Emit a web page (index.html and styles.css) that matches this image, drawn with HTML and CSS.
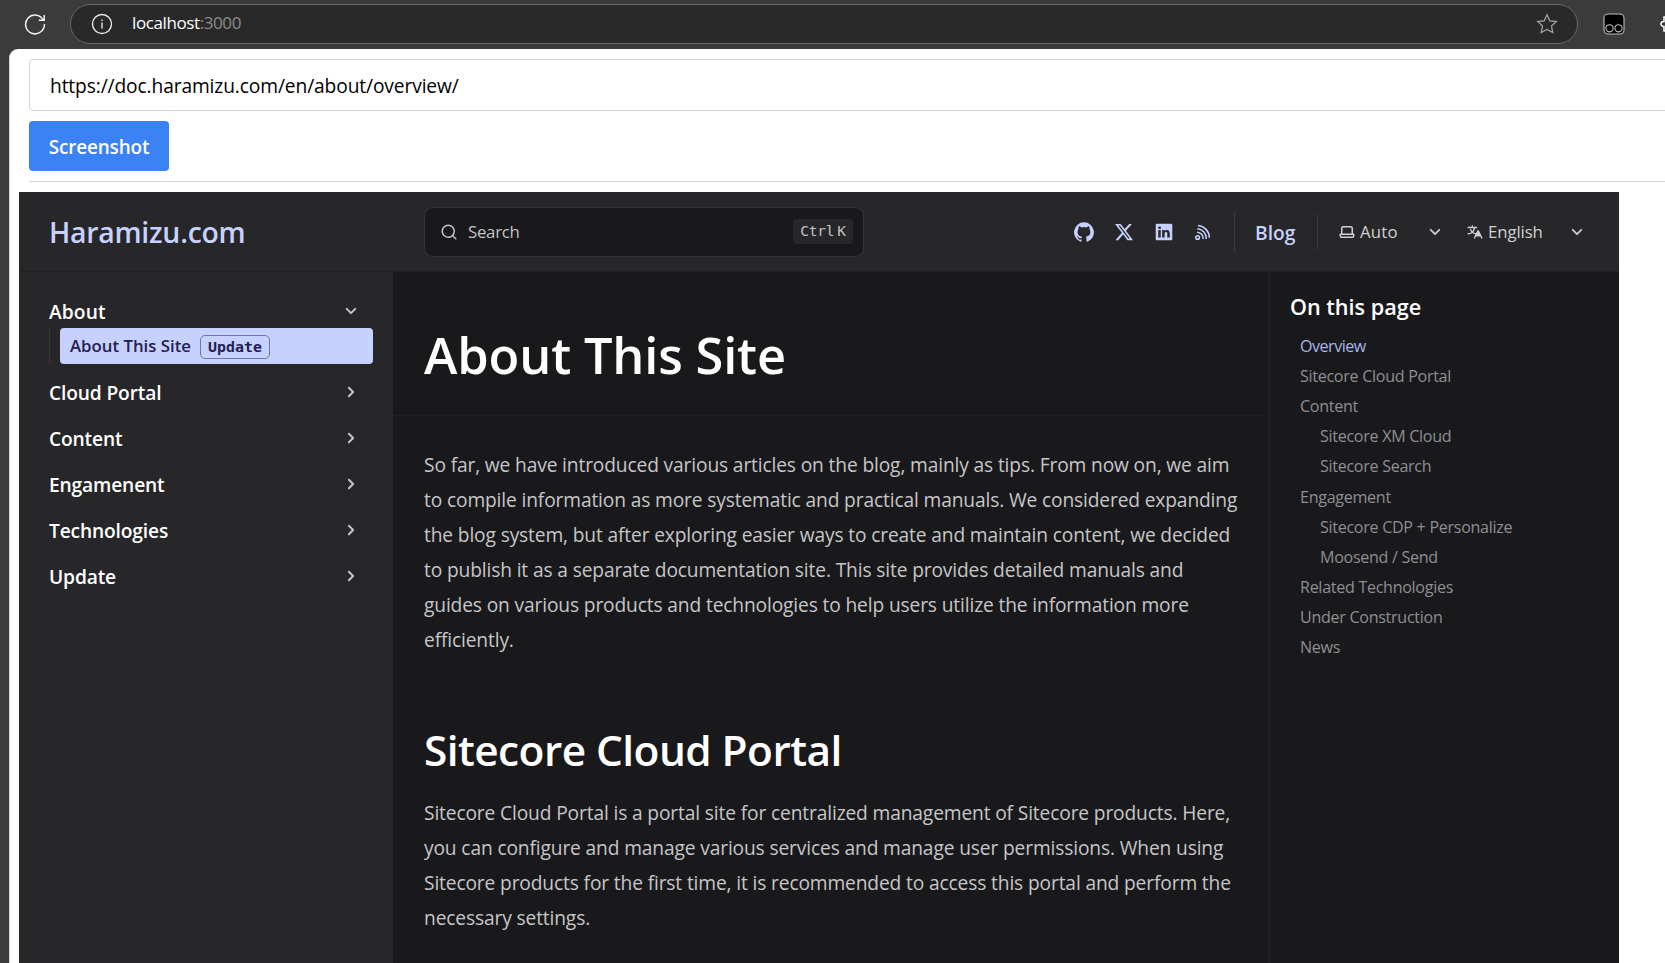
FILE: index.html
```html
<!DOCTYPE html>
<html lang="en">
<head>
<meta charset="utf-8">
<title>localhost:3000</title>
<link rel="stylesheet" href="styles.css">
</head>
<body>
<svg class="sprite" aria-hidden="true">
  <symbol id="chevron" viewBox="0 0 24 24"><path d="m14.83 11.29-4.24-4.24a1 1 0 1 0-1.42 1.41L12.71 12l-3.54 3.54a1 1 0 0 0 0 1.41 1 1 0 0 0 .71.29 1 1 0 0 0 .71-.29l4.24-4.24a1.002 1.002 0 0 0 0-1.42Z"/></symbol>
</svg>
<div class="toolbar">
  <svg class="reload" viewBox="0 0 22 22"><path d="M19.6 7.6A9.4 9.4 0 1 0 20.4 11M20.2 2v5.2h-5.4"/></svg>
  <div class="address">
    <svg class="info" viewBox="0 0 22 22"><circle cx="11" cy="11" r="9.5"/><path d="M11 9.6v6M11 6.4v1.6"/></svg>
    <span class="host">localhost</span><span class="port">:3000</span>
    <svg class="star" viewBox="0 0 22 22"><path d="m11 1.8 2.8 6 6.5.8-4.8 4.5 1.3 6.5L11 16.4l-5.8 3.2 1.3-6.5L1.7 8.6l6.5-.8z"/></svg>
  </div>
  <svg class="ext" viewBox="0 0 22 22"><rect x="1" y="1" width="20" height="20" rx="4"/><circle cx="6.5" cy="15.3" r="3.6"/><circle cx="15.5" cy="15.3" r="3.6"/></svg>
  <svg class="puzzle" viewBox="0 0 22 22"><path d="M8 4h3a2.5 2.5 0 0 1 5 0h4v14H4v-4.500H3.500a2.300 2.300 0 0 1 0-5H4V4z"/></svg>
</div>
<main class="page">
  <div class="field">https://doc.haramizu.com/en/about/overview/</div>
  <button class="shoot">Screenshot</button>
  <hr class="rule">
  <div class="shot">
    <header class="site-head">
      <div class="brand">Haramizu.com</div>
      <div class="search">
        <svg viewBox="0 0 24 24"><path d="M21.71 20.29 18 16.61A9 9 0 1 0 16.61 18l3.68 3.68a.999.999 0 0 0 1.42 0 1 1 0 0 0 0-1.39ZM11 18a7 7 0 1 1 0-14 7 7 0 0 1 0 14Z"/></svg>
        <span class="search-label">Search</span>
        <kbd><span>Ctrl</span><span>K</span></kbd>
      </div>
      <div class="social">
        <svg viewBox="0 0 24 24"><path d="M12 .3a12 12 0 0 0-3.8 23.38c.6.12.83-.26.83-.57L9 21.07c-3.34.72-4.04-1.61-4.04-1.61-.55-1.39-1.34-1.76-1.34-1.76-1.08-.74.09-.73.09-.73 1.2.09 1.83 1.24 1.83 1.24 1.08 1.83 2.81 1.3 3.5 1 .1-.78.42-1.31.76-1.61-2.67-.3-5.47-1.33-5.47-5.93 0-1.31.47-2.38 1.24-3.22-.14-.3-.54-1.52.1-3.18 0 0 1-.32 3.3 1.23a11.5 11.5 0 0 1 6 0c2.28-1.55 3.29-1.23 3.29-1.23.64 1.66.24 2.88.12 3.18a4.65 4.65 0 0 1 1.23 3.22c0 4.61-2.8 5.63-5.48 5.92.42.36.81 1.1.81 2.22l-.01 3.29c0 .31.2.69.82.57A12 12 0 0 0 12 .3Z"/></svg>
        <svg viewBox="0 0 24 24"><path d="M18.24 2.25h3.308l-7.227 8.26 8.502 11.24H16.17l-5.214-6.817L4.99 21.75H1.68l7.73-8.835L1.254 2.25H8.08l4.713 6.231zm-1.161 17.52h1.833L7.084 4.126H5.117z"/></svg>
        <svg viewBox="0 0 24 24"><path d="M20.47,2H3.53A1.45,1.45,0,0,0,2.06,3.43V20.57A1.45,1.45,0,0,0,3.53,22H20.47a1.45,1.45,0,0,0,1.47-1.43V3.43A1.45,1.45,0,0,0,20.47,2ZM8.09,18.74h-3v-9h3ZM6.59,8.48a1.56,1.56,0,1,1,0-3.12,1.57,1.57,0,1,1,0,3.12ZM18.91,18.74h-3V13.91c0-1.21-.43-2-1.52-2A1.65,1.65,0,0,0,12.85,13a2,2,0,0,0-.1.73v5h-3s0-8.18,0-9h3V11A3,3,0,0,1,15.46,9.5c2,0,3.45,1.29,3.45,4.06Z"/></svg>
        <svg class="rss" viewBox="0 0 24 24"><circle cx="4.600" cy="19" r="2.300"/><path d="M4 12.200a8 8 0 0 1 7.600 8.800M4.200 8A12.200 12.200 0 0 1 15.600 20.800M5 3.800A15.500 15.500 0 0 1 19.400 19.200"/></svg>
      </div>
      <a class="blog">Blog</a>
      <div class="picker theme">
        <svg viewBox="0 0 24 24"><path d="M21 14h-1V7a3 3 0 0 0-3-3H7a3 3 0 0 0-3 3v7H3a1 1 0 0 0-1 1v2a3 3 0 0 0 3 3h14a3 3 0 0 0 3-3v-2a1 1 0 0 0-1-1ZM6 7a1 1 0 0 1 1-1h10a1 1 0 0 1 1 1v7H6V7Zm14 10a1 1 0 0 1-1 1H5a1 1 0 0 1-1-1v-1h16v1Z"/></svg>
        <span>Auto</span>
        <svg class="chev down"><use href="#chevron"/></svg>
      </div>
      <div class="picker lang">
        <svg viewBox="0 0 24 24"><path d="M8.516 3a.94.94 0 0 0-.941.94v1.15H2.94a.94.94 0 1 0 0 1.882h7.362a7.422 7.422 0 0 1-1.787 3.958 7.42 7.42 0 0 1-1.422-2.425.94.94 0 1 0-1.774.627 9.303 9.303 0 0 0 1.785 3.043 7.422 7.422 0 0 1-4.164 1.278.94.94 0 1 0 0 1.881 9.303 9.303 0 0 0 5.575-1.855 9.303 9.303 0 0 0 4.11 1.74l-.763 1.525a.968.968 0 0 0-.016.034l-1.385 2.77a.94.94 0 1 0 1.683.841l1.133-2.267h5.806l1.134 2.267a.94.94 0 0 0 1.683-.841l-1.385-2.769a.95.95 0 0 0-.018-.036l-3.476-6.951a.94.94 0 0 0-1.682 0l-1.82 3.639a7.423 7.423 0 0 1-3.593-1.256 9.303 9.303 0 0 0 2.27-5.203h1.894a.94.94 0 0 0 0-1.881H9.456V3.94A.94.94 0 0 0 8.516 3Zm6.426 11.794a1.068 1.068 0 0 1-.02.039l-.703 1.407h3.924l-1.962-3.924-1.24 2.478Z"/></svg>
        <span>English</span>
        <svg class="chev down"><use href="#chevron"/></svg>
      </div>
    </header>
    <div class="cols">
      <nav class="side">
        <div class="group open"><span>About</span><svg class="chev down"><use href="#chevron"/></svg></div>
        <div class="sub"><a class="current"><span>About This Site</span><em class="badge">Update</em></a></div>
        <div class="group"><span>Cloud Portal</span><svg class="chev"><use href="#chevron"/></svg></div>
        <div class="group"><span>Content</span><svg class="chev"><use href="#chevron"/></svg></div>
        <div class="group"><span>Engamenent</span><svg class="chev"><use href="#chevron"/></svg></div>
        <div class="group"><span>Technologies</span><svg class="chev"><use href="#chevron"/></svg></div>
        <div class="group"><span>Update</span><svg class="chev"><use href="#chevron"/></svg></div>
      </nav>
      <article class="content">
        <div class="hero"><h1>About This Site</h1></div>
        <div class="body">
          <p>So far, we have introduced various articles on the blog, mainly as tips. From now on, we aim<br>to compile information as more systematic and practical manuals. We considered expanding<br>the blog system, but after exploring easier ways to create and maintain content, we decided<br>to publish it as a separate documentation site. This site provides detailed manuals and<br>guides on various products and technologies to help users utilize the information more<br>efficiently.</p>
          <h2>Sitecore Cloud Portal</h2>
          <p>Sitecore Cloud Portal is a portal site for centralized management of Sitecore products. Here,<br>you can configure and manage various services and manage user permissions. When using<br>Sitecore products for the first time, it is recommended to access this portal and perform the<br>necessary settings.</p>
        </div>
      </article>
      <aside class="toc">
        <h3>On this page</h3>
        <a class="here">Overview</a>
        <a>Sitecore Cloud Portal</a>
        <a>Content</a>
        <a class="deep">Sitecore XM Cloud</a>
        <a class="deep">Sitecore Search</a>
        <a>Engagement</a>
        <a class="deep">Sitecore CDP + Personalize</a>
        <a class="deep">Moosend / Send</a>
        <a>Related Technologies</a>
        <a>Under Construction</a>
        <a>News</a>
      </aside>
    </div>
  </div>
</main>
</body>
</html>
```
FILE: styles.css
```css
* { box-sizing: border-box; }
body {
  margin: 0;
  height: 963px;
  overflow: hidden;
  background: #3b3b3b;
  font-family: "Open Sans", "Noto Sans", sans-serif;
  display: flex;
  flex-direction: column;
}
svg { flex: none; display: block; fill: currentColor; }
.sprite { width: 0; height: 0; position: absolute; }
h1, h2, h3, p { margin: 0; }

.toolbar { height: 49px; flex: none; display: flex; align-items: center; padding: 0 0 1px 24px; color: #fff; }
.reload { width: 22px; height: 22px; fill: none; stroke: #f2f2f2; stroke-width: 1.5; }
.address { margin-left: 24px; width: 1508px; height: 40px; flex: none; display: flex; align-items: center; padding: 0 19px 0 20px; border: 1px solid #666; border-radius: 20px; background: #292929; font-size: 17px; letter-spacing: -.4px; }
.address span { line-height: 36px; height: 38px; }
.info { width: 22px; height: 22px; fill: none; stroke: #e6e6e6; stroke-width: 1.4; margin-right: 19px; }
.port { color: #8c8c8c; }
.star { width: 22px; height: 22px; margin-left: auto; fill: none; stroke: #a0a0a0; stroke-width: 1.3; }
.ext { width: 22px; height: 22px; margin-left: 25px; fill: #000; stroke: #bdbdbd; stroke-width: 1.1; }
.puzzle { width: 22px; height: 22px; margin-left: 35px; fill: none; stroke: #fff; stroke-width: 1.5; }

.page { flex: 1; margin-left: 9px; padding: 10px 0 0 9px; background: #fff; border-left: 1px solid #dadada; border-top-left-radius: 9px; overflow: hidden; }
.field { margin-left: 10px; width: 1700px; height: 52px; border: 1px solid #d1d5db; border-radius: 4px; padding: 0 20px; font-size: 19.2px; line-height: 51px; letter-spacing: -.12px; color: #000; }
.shoot { display: block; margin: 10px 0 0 10px; width: 140px; height: 50px; padding: 0; border: 0; border-radius: 4px; background: #3b82f6; color: #fff; font: 600 18.9px/52px "Open Sans", sans-serif; letter-spacing: -.14px; white-space: nowrap; }
.rule { margin: 10px 0 10px 10px; border: 0; border-top: 1px solid #d1d5db; }

.shot { width: 1600px; height: 771px; background: #19191b; }
.site-head { height: 80px; display: flex; align-items: center; background: #272729; border-bottom: 1px solid #202022; color: #c7d1ff; white-space: nowrap; }
.brand { width: 405px; padding-left: 30px; font-size: 28.4px; letter-spacing: -.25px; font-weight: 600; flex: none; }
.search { width: 440px; height: 50px; flex: none; display: flex; align-items: center; padding: 0 10px 0 15px; border: 1px solid #343436; border-radius: 9px; background: #19191b; color: #c2c2c4; font-size: 16.8px; letter-spacing: -.25px; }
.search svg { width: 18px; height: 18px; margin-right: 10px; }
kbd { margin-left: auto; width: 60px; height: 25px; display: flex; justify-content: center; gap: 3px; background: #272729; border-radius: 4px; font: 14.5px/25px "DejaVu Sans Mono", monospace; }
.social { flex: none; display: flex; align-items: center; gap: 20px; margin-left: 210px; height: 40px; padding-right: 20px; border-right: 1px solid #3a3a3d; }
.social svg { width: 20px; height: 20px; }
.social .rss { width: 19px; margin-right: 1px; fill: none; stroke: currentColor; stroke-width: 1.9; }
.blog { height: 36px; width: 83px; flex: none; padding: 3px 0 0 20px; border-right: 1px solid #3a3a3d; font-size: 19.2px; font-weight: 600; line-height: 32px; }
.picker { flex: none; display: flex; align-items: center; color: #d0d0d2; font-size: 16.8px; }
.picker svg:first-child { width: 18px; height: 18px; margin-right: 4px; }
.theme { margin-left: 20px; width: 128px; padding-right: 19px; letter-spacing: .2px; }
.lang { width: 123px; letter-spacing: -.1px; }
.chev { width: 24px; height: 24px; margin-left: auto; color: #c4c4c6; }
.down { transform: rotate(90deg); }

.cols { display: flex; height: 691px; }
.side { width: 374px; flex: none; background: #272729; padding: 23px 20px 0 30px; color: #fff; }
.group { height: 46px; display: flex; align-items: center; padding-right: 10px; font-size: 19.2px; font-weight: 600; letter-spacing: -.15px; }
.open { height: 32px; letter-spacing: .1px; }
.sub { height: 37px; margin-bottom: 5px; padding: 1px 0 0 10px; border-left: 1px solid #363638; }
.current { display: flex; align-items: center; height: 36px; border-radius: 4px; background: #c7d1ff; color: #252050; padding: 0 0 1px 10px; font-size: 16.8px; font-weight: 600; }
.badge { margin: 2px 0 0 9px; width: 70px; height: 24px; text-align: center; border: 1px solid #7377a8; border-radius: 5px; font: bold 14.9px/23px "DejaVu Sans Mono", monospace; }

.content { width: 876px; flex: none; }
.hero { height: 144px; border-bottom: 1px solid #1f1f21; padding: 53px 0 0 31px; }
h1 { color: #fff; font-size: 50.5px; line-height: 60px; font-weight: 600; letter-spacing: -.15px; white-space: nowrap; }
.body { padding: 31px 0 0 31px; color: #c6c6c8; font-size: 19.2px; line-height: 35px; letter-spacing: -.14px; white-space: nowrap; }
h2 { color: #fff; font-size: 42.4px; line-height: 54px; font-weight: 600; letter-spacing: -.55px; margin: 66px 0 18px; }

.toc { flex: 1; border-left: 1px solid #232325; padding: 20px 0 0 20px; color: #8e8e93; font-size: 16.1px; letter-spacing: -.3px; white-space: nowrap; }
h3 { color: #fff; font-size: 21.6px; line-height: 30px; font-weight: 600; letter-spacing: 0; margin-bottom: 8.6px; }
.toc a { display: block; height: 30.2px; line-height: 30.2px; padding-left: 10px; }
.toc .deep { padding-left: 30px; }
.toc .here { color: #a9b5e8; font-weight: 500; letter-spacing: -.5px; }
```
